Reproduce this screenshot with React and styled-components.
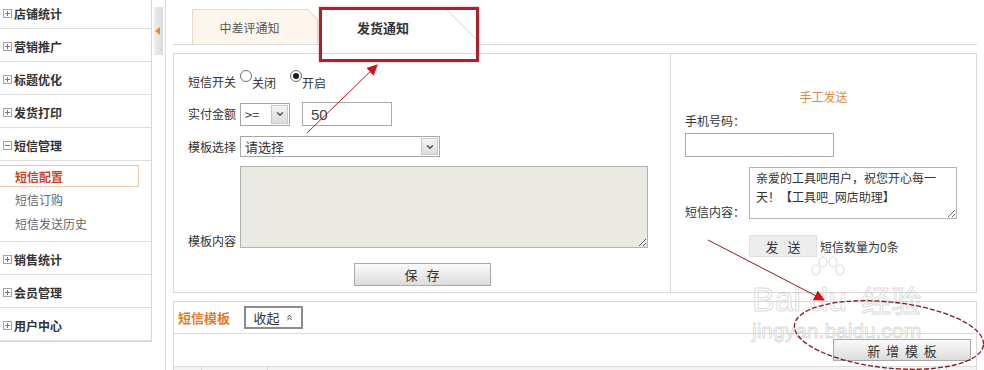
import React from "react";
import styled, { createGlobalStyle } from "styled-components";
import { ChevronDown, ChevronsUp } from "lucide-react";

const GlobalStyle = createGlobalStyle`
  *, *::before, *::after { box-sizing: border-box; }
  html, body { margin: 0; padding: 0; background: #fff; }
  body {
    font-family: "Noto Sans CJK SC", "Liberation Sans", sans-serif;
    font-size: 12px;
    color: #333;
  }
`;

const Page = styled.div`
  position: relative;
  display: flex;
  width: 984px;
  height: 370px;
  overflow: hidden;
`;

/* ---------- sidebar ---------- */

const Sidebar = styled.nav`
  flex: none;
  align-self: flex-start;
  width: 152px;
  margin-top: -4px;
  border-right: 1px solid #d6d6d6;
  border-bottom: 1px solid #d6d6d6;
`;

const MenuHead = styled.div`
  display: flex;
  align-items: center;
  gap: 2px;
  height: 33px;
  padding: 2px 0 0 3px;
  border-bottom: 1px solid #dedede;
  font-size: 12px;
  font-weight: bold;
  color: #333;
`;

const SubList = styled.div`
  height: 81px;
  padding-top: 4px;
  border-bottom: 1px solid #dedede;
`;

const SubItem = styled.div`
  display: flex;
  align-items: center;
  height: ${(p) => (p.$active ? 22 : 24)}px;
  margin: 0 12px 0 -1px;
  padding-left: 15px;
  border: 1px solid ${(p) => (p.$active ? "#e8c7aa" : "transparent")};
  color: ${(p) => (p.$active ? "#c8461c" : "#666")};
  font-weight: ${(p) => (p.$active ? "bold" : "normal")};
`;

const Toggle = ({ open }) => (
  <svg width="9" height="9" viewBox="0 0 9 9">
    <rect x="0.5" y="0.5" width="8" height="8" fill="#fff" stroke="#a4a4a4" />
    <path d="M2 4.5h5" stroke="#777" />
    {!open && <path d="M4.5 2v5" stroke="#777" />}
  </svg>
);

const Splitter = styled.div`
  flex: none;
  width: 14px;
  border-right: 1px solid #dadada;
`;

const Handle = styled.div`
  display: flex;
  align-items: center;
  width: 9px;
  height: 48px;
  margin: 7px 0 0 2px;
  padding-left: 1px;
  background: linear-gradient(to right, #ececec, #dcdcdc);
  &::before {
    content: "";
    border-style: solid;
    border-width: 4px 5px 4px 0;
    border-color: transparent #ee8a2a transparent transparent;
  }
`;

/* ---------- main ---------- */

const Main = styled.main`
  flex: 1;
  min-width: 0;
  padding: 0 7px;
`;

const TabBar = styled.div`
  display: flex;
  align-items: flex-end;
  gap: 2px;
  height: 45px;
  padding-left: 19px;
  border-bottom: 1px solid #dadada;
`;

const Tab = styled.div`
  position: relative;
  display: flex;
  align-items: center;
  justify-content: center;
  width: ${(p) => p.$w}px;
  height: ${(p) => (p.$active ? 36 : 35)}px;
  margin-bottom: ${(p) => (p.$active ? -1 : 0)}px;
  padding-right: ${(p) => p.$fold}px;
  border: 1px solid ${(p) => (p.$active ? "#dcdcdc" : "#e7d7c3")};
  border-bottom: none;
  background: ${(p) => (p.$active ? "#fff" : "#fdf6ec")};
  font-size: ${(p) => (p.$active ? 13 : 12)}px;
  font-weight: ${(p) => (p.$active ? "bold" : "normal")};
  color: ${(p) => (p.$active ? "#333" : "#555")};
  &::after {
    content: "";
    position: absolute;
    top: -1px;
    right: -1px;
    width: ${(p) => p.$fold}px;
    height: ${(p) => p.$fold}px;
    background: linear-gradient(
      to top right,
      transparent calc(50% - 0.7px),
      ${(p) => (p.$active ? "#d6d6d6" : "#dccab3")} 50%,
      #fff calc(50% + 0.7px)
    );
  }
`;

const Panel = styled.section`
  display: grid;
  grid-template-columns: 497px 1fr;
  height: 240px;
  margin-top: 8px;
  border: 1px solid #d9d9d9;
`;

const Cell = styled.div`
  display: flex;
  flex-direction: column;
  border-right: ${(p) => (p.$divider ? "1px solid #d9d9d9" : "none")};
`;

const Row = styled.div`
  display: flex;
  align-items: ${(p) => p.$align || "center"};
  justify-content: ${(p) => p.$justify || "flex-start"};
  height: ${(p) => p.$h}px;
  margin-top: ${(p) => p.$mt}px;
  padding-left: ${(p) => (p.$justify ? 0 : 14)}px;
`;

const Label = styled.span`
  flex: none;
  width: ${(p) => p.$w || 52}px;
  line-height: 14px;
  color: #333;
`;

const RadioOption = styled.label`
  display: flex;
  align-items: center;
  height: 100%;
  margin-right: 14px;
  color: #333;
`;

const RadioDot = styled.span`
  display: inline-flex;
  align-items: center;
  justify-content: center;
  align-self: flex-start;
  width: 12px;
  height: 12px;
  margin-top: -2px;
  border: 1px solid #6c6c6c;
  border-radius: 50%;
  background: #fff;
  &::after {
    content: "";
    width: 6px;
    height: 6px;
    border-radius: 50%;
    background: ${(p) => (p.$checked ? "#1c1c1c" : "transparent")};
  }
`;

const SelectBox = styled.div`
  display: flex;
  width: ${(p) => p.$w}px;
  height: ${(p) => p.$h}px;
  padding: 1px;
  border: 1px solid #a7a7a7;
  background: #fff;
`;

const SelectValue = styled.span`
  flex: 1;
  display: flex;
  align-items: center;
  padding-left: 3px;
  font-size: 13px;
  color: #333;
`;

const SelectArrow = styled.span`
  display: flex;
  align-items: center;
  justify-content: center;
  width: 17px;
  border: 1px solid #c9c9c9;
  background: linear-gradient(#f3f3f3, #dcdcdc);
  color: #4a4a4a;
`;

const Select = ({ w, h, value }) => (
  <SelectBox $w={w} $h={h}>
    <SelectValue>{value}</SelectValue>
    <SelectArrow>
      <ChevronDown size={10} strokeWidth={3.2} />
    </SelectArrow>
  </SelectBox>
);

const TextInput = styled.div`
  display: flex;
  align-items: center;
  width: ${(p) => p.$w}px;
  height: 24px;
  margin-left: ${(p) => p.$ml || 0}px;
  padding-left: 8px;
  border: 1px solid #a9a9a9;
  background: #fff;
  font-family: "Liberation Sans", sans-serif;
  font-size: 15px;
  color: #444;
`;

const Area = styled.textarea`
  display: block;
  width: ${(p) => p.$w}px;
  height: ${(p) => p.$h}px;
  margin: 0;
  padding: 0 18px 0 6px;
  border: 1px solid #b3b3b3;
  background: ${(p) => p.$bg || "#fff"};
  font-family: "Noto Sans CJK SC", sans-serif;
  font-size: 12px;
  line-height: 19px;
  color: #333;
  outline: none;
`;

const Button = styled.button`
  display: flex;
  align-items: center;
  justify-content: center;
  gap: 5px;
  width: ${(p) => p.$w}px;
  height: ${(p) => p.$h}px;
  padding: 0 0 0 ${(p) => p.$ls || 0}px;
  border: ${(p) => p.$border || "1px solid #a9a9a9"};
  background: ${(p) => p.$bg || "linear-gradient(#fafafa, #dcdcdc)"};
  font-family: "Noto Sans CJK SC", sans-serif;
  font-size: 13px;
  letter-spacing: ${(p) => p.$ls || 0}px;
  color: #333;
`;

const Title = styled.div`
  margin-top: 36px;
  line-height: 14px;
  text-align: center;
  color: #dc8a3e;
`;

const Note = styled.span`
  margin-left: 3px;
  color: #333;
`;

/* ---------- template section ---------- */

const TplPanel = styled.section`
  margin-top: 8px;
  border: 1px solid #d9d9d9;
`;

const TplHead = styled.div`
  display: flex;
  align-items: center;
  gap: 14px;
  height: 32px;
  padding-left: 4px;
  border-bottom: 1px solid #dcdcdc;
`;

const TplTitle = styled.span`
  font-size: 13px;
  font-weight: bold;
  color: #e07c2c;
`;

const TplTools = styled.div`
  display: flex;
  align-items: center;
  justify-content: flex-end;
  height: 33px;
  padding-right: 5px;
  border-bottom: 1px solid #dcdcdc;
`;

const TableHead = styled.div`
  display: grid;
  grid-template-columns: 28px 66px 1fr 29px;
  height: 30px;
  background: #f3f3f3;
`;

const HeadCell = styled.div`
  border-right: ${(p) => (p.$last ? "none" : "1px solid #d6d6d6")};
`;

/* ---------- annotations ---------- */

const Highlight = styled.div`
  position: absolute;
  left: 319px;
  top: 7px;
  width: 160px;
  height: 55px;
  border: 3px solid #a9232b;
  box-shadow: 0 0 2px rgba(190, 30, 30, 0.45);
  pointer-events: none;
`;

const Overlay = styled.svg`
  position: absolute;
  left: 0;
  top: 0;
  pointer-events: none;
`;

const Watermark = styled.div`
  position: absolute;
  left: 752px;
  top: 258px;
  display: flex;
  flex-direction: column;
  align-items: flex-start;
  pointer-events: none;
  font-family: "Liberation Sans", "Noto Sans CJK SC", sans-serif;
  color: rgba(255, 255, 255, 0.4);
  -webkit-text-stroke: 1px rgba(175, 175, 175, 0.45);
`;

const WmLogo = styled.div`
  display: flex;
  align-items: flex-end;
  height: 58px;
  font-size: 34px;
  line-height: 34px;
`;

const WmPaw = styled.span`
  display: flex;
  flex-direction: column;
  align-items: center;
  width: 54px;
`;

const WmCjk = styled.span`
  margin-left: 6px;
  font-family: "Noto Sans CJK SC", sans-serif;
  font-size: 30px;
`;

const WmUrl = styled.div`
  margin-top: 4px;
  font-size: 21px;
  line-height: 21px;
`;

const menus = [
  { title: "店铺统计" },
  { title: "营销推广" },
  { title: "标题优化" },
  { title: "发货打印" },
  {
    title: "短信管理",
    open: true,
    items: [
      { label: "短信配置", active: true },
      { label: "短信订购" },
      { label: "短信发送历史" },
    ],
  },
  { title: "销售统计" },
  { title: "会员管理" },
  { title: "用户中心" },
];

export default function App() {
  return (
    <>
      <GlobalStyle />
      <Page>
        <Sidebar>
          {menus.map((m) => (
            <React.Fragment key={m.title}>
              <MenuHead>
                <Toggle open={m.open} />
                {m.title}
              </MenuHead>
              {m.items && (
                <SubList>
                  {m.items.map((it) => (
                    <SubItem key={it.label} $active={it.active}>
                      {it.label}
                    </SubItem>
                  ))}
                </SubList>
              )}
            </React.Fragment>
          ))}
        </Sidebar>

        <Splitter>
          <Handle />
        </Splitter>

        <Main>
          <TabBar>
            <Tab $w={126} $fold={11}>中差评通知</Tab>
            <Tab $w={158} $fold={32} $active>发货通知</Tab>
          </TabBar>

          <Panel>
            <Cell $divider>
              <Row $mt={18} $h={20}>
                <Label>短信开关</Label>
                <RadioOption>
                  <RadioDot />
                  关闭
                </RadioOption>
                <RadioOption>
                  <RadioDot $checked />
                  开启
                </RadioOption>
              </Row>
              <Row $mt={10} $h={24}>
                <Label>实付金额</Label>
                <Select w={50} h={23} value=">=" />
                <TextInput $w={90} $ml={12}>50</TextInput>
              </Row>
              <Row $mt={10} $h={21}>
                <Label>模板选择</Label>
                <Select w={200} h={21} value="请选择" />
              </Row>
              <Row $mt={9} $h={82} $align="flex-end">
                <Label>模板内容</Label>
                <Area $w={408} $h={82} $bg="#ebe9e3" readOnly />
              </Row>
              <Row $mt={15} $h={23} $justify="center">
                <Button $w={137} $h={23} $ls={3}>保 存</Button>
              </Row>
            </Cell>

            <Cell>
              <Title>手工发送</Title>
              <Row $mt={5} $h={24}>
                <Label $w={80}>手机号码：</Label>
              </Row>
              <Row $mt={0} $h={24}>
                <TextInput $w={149} />
              </Row>
              <Row $mt={10} $h={52} $align="flex-end">
                <Label $w={64}>短信内容：</Label>
                <Area
                  $w={208}
                  $h={52}
                  readOnly
                  value="亲爱的工具吧用户，祝您开心每一天！【工具吧_网店助理】"
                />
              </Row>
              <Row $mt={16} $h={22}>
                <Label $w={64} />
                <Button
                  $w={68}
                  $h={22}
                  $ls={3}
                  $bg="#ededed"
                  $border="1px solid #e2e2e2"
                >
                  发 送
                </Button>
                <Note>短信数量为0条</Note>
              </Row>
            </Cell>
          </Panel>

          <TplPanel>
            <TplHead>
              <TplTitle>短信模板</TplTitle>
              <Button $w={59} $h={23} $bg="#fff" $border="2px solid #8c8c8c">
                收起
                <ChevronsUp size={9} strokeWidth={2.6} />
              </Button>
            </TplHead>
            <TplTools>
              <Button $w={138} $h={22} $ls={1.5}>新 增 模 板</Button>
            </TplTools>
            <TableHead>
              <HeadCell />
              <HeadCell />
              <HeadCell />
              <HeadCell $last />
            </TableHead>
          </TplPanel>
        </Main>

        <Watermark>
          <WmLogo>
            <span>Bai</span>
            <WmPaw>
              <svg width="40" height="26" viewBox="0 0 40 26">
                <g fill="none" stroke="rgba(175,175,175,0.45)">
                  <ellipse cx="8" cy="14" rx="4" ry="5" />
                  <ellipse cx="15" cy="6" rx="4" ry="5" />
                  <ellipse cx="25" cy="6" rx="4" ry="5" />
                  <ellipse cx="32" cy="14" rx="4" ry="5" />
                </g>
              </svg>
              <span>du</span>
            </WmPaw>
            <WmCjk>经验</WmCjk>
          </WmLogo>
          <WmUrl>jingyan.baidu.com</WmUrl>
        </Watermark>

        <Highlight />

        <Overlay width="984" height="370" viewBox="0 0 984 370">
          <defs>
            <marker
              id="head"
              viewBox="0 0 10 10"
              refX="9"
              refY="5"
              markerWidth="11"
              markerHeight="11"
              markerUnits="userSpaceOnUse"
              orient="auto"
            >
              <path d="M0 0L10 5L0 10z" fill="#cf1219" />
            </marker>
          </defs>
          <path d="M307 133L377 65" stroke="#b3141b" strokeWidth="1" markerEnd="url(#head)" />
          <path d="M708 240L824 300" stroke="#8e1a1f" strokeWidth="1" markerEnd="url(#head)" />
          <ellipse
            cx="889"
            cy="335"
            rx="95"
            ry="33"
            transform="rotate(6 889 335)"
            fill="none"
            stroke="#7e1d23"
            strokeWidth="1.3"
            strokeDasharray="5 2"
          />
        </Overlay>
      </Page>
    </>
  );
}
